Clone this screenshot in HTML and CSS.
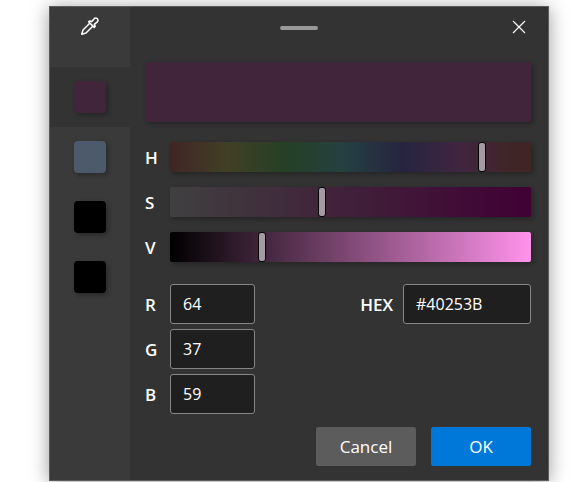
FILE: index.html
```html
<!DOCTYPE html>
<html lang="en">
<head>
<meta charset="utf-8">
<title>Color picker</title>
<link rel="stylesheet" href="styles.css">
</head>
<body>
<div class="dialog" role="dialog" aria-label="Color picker">
  <span class="grip"></span>
  <aside class="history">
    <button class="slot" type="button" aria-label="Pick a color">
      <svg class="pipette" width="20" height="20" viewBox="0 0 20 20" fill="none" stroke="#fff" stroke-width="1.500" stroke-linejoin="round" stroke-linecap="round">
        <path d="M9.500 7.500 3 14 1.700 18.300 6 17 12.500 10.500"/>
        <path d="M8.600 5.800 14.200 11.400 15.200 10.200 14.300 8.400 17.600 5.600A2.300 2.300 0 0 0 14.400 2.400L11.600 5.700 9.800 4.800Z"/>
      </svg>
    </button>
    <button class="slot selected" type="button" aria-label="#40253B"><span class="swatch plum"></span></button>
    <button class="slot" type="button" aria-label="#4D5A6B"><span class="swatch slate"></span></button>
    <button class="slot" type="button" aria-label="#000000"><span class="swatch black"></span></button>
    <button class="slot" type="button" aria-label="#000000"><span class="swatch black"></span></button>
  </aside>
  <main class="pane">
    <header class="header">
      <button class="close" type="button" aria-label="Close">
        <svg width="14" height="14" viewBox="0 0 14 14" fill="none" stroke="#fff" stroke-width="1.200"><path d="M1 1 13 13M13 1 1 13"/></svg>
      </button>
    </header>
    <div class="preview"></div>
    <div class="sliders">
      <div class="row"><label for="h">H</label><input class="slider hue" id="h" type="range" min="0" max="360" value="314"></div>
      <div class="row"><label for="s">S</label><input class="slider saturation" id="s" type="range" min="0" max="100" value="42"></div>
      <div class="row"><label for="v">V</label><input class="slider value" id="v" type="range" min="0" max="100" value="25"></div>
    </div>
    <div class="fields">
      <div class="channels">
        <div class="row"><label for="r">R</label><input class="field" id="r" type="text" value="64"></div>
        <div class="row"><label for="g">G</label><input class="field" id="g" type="text" value="37"></div>
        <div class="row"><label for="b">B</label><input class="field" id="b" type="text" value="59"></div>
      </div>
      <div class="row hex"><label for="hex">HEX</label><input class="field wide" id="hex" type="text" value="#40253B"></div>
    </div>
    <footer class="actions">
      <button class="button" type="button">Cancel</button>
      <button class="button primary" type="button">OK</button>
    </footer>
  </main>
</div>
</body>
</html>
```

FILE: styles.css
```css
* {
  box-sizing: border-box;
}

body {
  margin: 0;
  padding: 6px 39px 1px 49px;
  background: #fff;
  color: #fff;
  font: 17px/20px "Open Sans", sans-serif;
  overflow: hidden;
}

button,
input {
  margin: 0;
  font: inherit;
  color: inherit;
}

.dialog {
  position: relative;
  display: flex;
  border: 1px solid #5c5c5c;
  background: #333;
  box-shadow: 0 2px 18px rgba(0, 0, 0, 0.4);
}

.grip {
  position: absolute;
  top: 19px;
  left: 50%;
  width: 38px;
  height: 4px;
  margin-left: -19px;
  border-radius: 2px;
  background: #999;
}

.history {
  flex: 0 0 80px;
  background: #3a3a3a;
}

.slot {
  display: flex;
  align-items: center;
  justify-content: center;
  width: 100%;
  height: 60px;
  padding: 0;
  border: 0;
  background: none;
}

.slot.selected {
  background: #333;
}

.pipette {
  margin-bottom: 22px;
}

.swatch {
  width: 32px;
  height: 32px;
  border-radius: 4px;
  box-shadow: 2px 2px 5px rgba(0, 0, 0, 0.3);
}

.plum {
  background: #40253b;
}

.slate {
  background: #4d5a6b;
}

.black {
  background: #000;
}

.pane {
  flex: 1;
  padding: 0 17px 14px 15px;
}

.header {
  display: flex;
  justify-content: flex-end;
  height: 55px;
  padding-top: 8px;
}

.close {
  display: flex;
  align-items: center;
  justify-content: center;
  width: 24px;
  height: 24px;
  padding: 0;
  border: 0;
  background: none;
}

.preview {
  height: 60px;
  border-radius: 2px;
  background: #40253b;
  box-shadow: 2px 2px 5px rgba(0, 0, 0, 0.3);
}

.sliders {
  display: grid;
  gap: 15px;
  margin-top: 20px;
}

.row {
  display: flex;
  align-items: center;
}

.row label {
  min-width: 25px;
  padding-top: 2px;
  font-weight: 600;
}

.slider {
  appearance: none;
  flex: 1;
  min-width: 0;
  height: 30px;
  border-radius: 2px;
  box-shadow: 2px 2px 5px rgba(0, 0, 0, 0.3);
}

.slider::-webkit-slider-thumb {
  appearance: none;
  width: 8px;
  height: 30px;
  border: 1px solid #000;
  border-radius: 3px;
  background: #a59aa3;
}

.hue {
  background: linear-gradient(to right, #402525, #404025 16%, #254025 32%, #254040 48%, #252540 64%, #402540 80%, #402525 96%);
}

.saturation {
  background: linear-gradient(to right, #404040, #400034);
}

.value {
  background: linear-gradient(to right, #000, #ff93eb);
}

.fields {
  display: flex;
  align-items: flex-start;
  justify-content: space-between;
  margin-top: 22px;
}

.channels {
  display: grid;
  gap: 5px;
}

.hex {
  gap: 10px;
}

.field {
  width: 85px;
  height: 40px;
  padding: 0 12px 1px;
  border: 1px solid #868686;
  border-radius: 3px;
  background: #1f1f1f;
  font-size: 16px;
}

.field.wide {
  width: 128px;
}

.actions {
  display: flex;
  justify-content: flex-end;
  gap: 15px;
  margin-top: 13px;
}

.button {
  width: 100px;
  height: 39px;
  padding: 0;
  border: 0;
  border-radius: 2px;
  background: #5c5c5c;
}

.button.primary {
  background: #0078d9;
}
```
